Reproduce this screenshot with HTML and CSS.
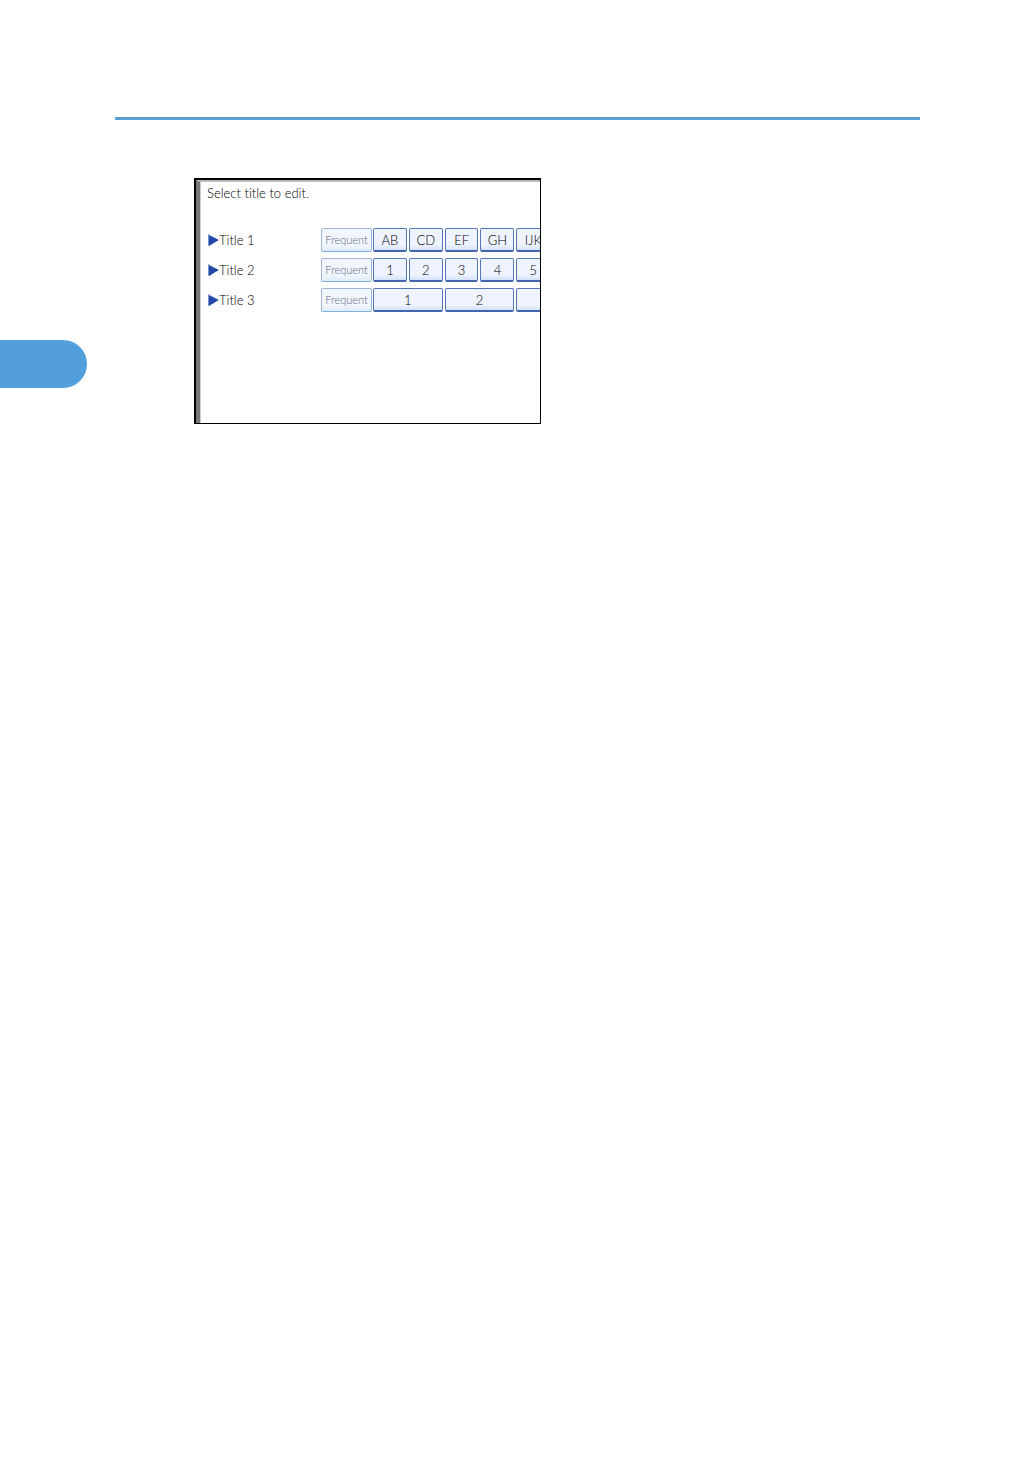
FILE: index.html
```html
<!DOCTYPE html>
<html lang="en">
<head>
	<meta charset="utf-8">
	<title>Select title to edit</title>
	<link rel="stylesheet" href="styles.css">
</head>
<body>
	<header class="rule"></header>
	<div class="tab"></div>

	<main class="panel">
		<div class="screen">
			<p class="message">Select title to edit.</p>

			<div class="row">
				<h2 class="title"><svg class="arrow" viewBox="0 0 11 12"><path d="M0 0L11 6L0 12Z" fill="#7893cb"/><path d="M1 1.5L10.5 6L1 12Z" fill="#2348a5"/></svg>Title 1</h2>
				<button class="key frequent" disabled>Frequent</button>
				<div class="keys">
					<button class="key">AB</button>
					<button class="key">CD</button>
					<button class="key">EF</button>
					<button class="key">GH</button>
					<button class="key">IJK</button>
				</div>
			</div>

			<div class="row">
				<h2 class="title"><svg class="arrow" viewBox="0 0 11 12"><path d="M0 0L11 6L0 12Z" fill="#7893cb"/><path d="M1 1.5L10.5 6L1 12Z" fill="#2348a5"/></svg>Title 2</h2>
				<button class="key frequent" disabled>Frequent</button>
				<div class="keys">
					<button class="key">1</button>
					<button class="key">2</button>
					<button class="key">3</button>
					<button class="key">4</button>
					<button class="key">5</button>
				</div>
			</div>

			<div class="row">
				<h2 class="title"><svg class="arrow" viewBox="0 0 11 12"><path d="M0 0L11 6L0 12Z" fill="#7893cb"/><path d="M1 1.5L10.5 6L1 12Z" fill="#2348a5"/></svg>Title 3</h2>
				<button class="key frequent" disabled>Frequent</button>
				<div class="keys">
					<button class="key wide">1</button>
					<button class="key wide">2</button>
					<button class="key wide"></button>
				</div>
			</div>
		</div>
	</main>
</body>
</html>
```

FILE: styles.css
```css
*{
	box-sizing: border-box;
	margin: 0;
	padding: 0;
}
body{
	background-color: white;
	font-family: Lato, "Liberation Sans", sans-serif;
	font-size: 13px;
	font-weight: 300;
	font-variant-ligatures: none;
	line-height: 16px;
	color: black;
}
.rule{
	height: 3px;
	margin: 117px 116px 0 115px;
	background-color: #5b9fd3;
}
/* chapter tab on the page edge */
.tab{
	position: absolute;
	left: 0;
	top: 340px;
	width: 87px;
	height: 48px;
	border-radius: 0 24px 24px 0;
	background-color: #539fdc;
}
.panel{
	width: 347px;
	margin: 58px 0 0 194px;
	border: 1px solid black;
	border-top-width: 2px;
	border-left-width: 2px;
}
.screen{
	min-height: 243px;
	padding: 3px 0 16px 7px;
	border-left: 4px solid #777;
	border-top: 2px solid #bbb;
	box-shadow: inset 1px 0 #ccc;
	overflow: hidden;
}
.message{
	margin-bottom: 27px;
}
.row{
	display: flex;
	align-items: center;
	margin-bottom: 6px;
}
.title{
	display: flex;
	align-items: center;
	flex: 0 0 114px;
	padding-left: 1px;
	font-size: 13px;
	font-weight: 300;
}
.arrow{
	width: 11px;
	height: 12px;
}
.keys{
	display: grid;
	grid-template-columns: repeat(6, 1fr);
	gap: 2px;
	flex: 0 0 213px;
}
.key{
	height: 24px;
	border: 1px solid #5478b4;
	border-bottom: 2px solid #4265ae;
	border-radius: 2px;
	background: linear-gradient(#eef3ff 75%, #d3e2fa);
	font: inherit;
	color: black;
	white-space: nowrap;
}
.wide{
	grid-column: span 2;
}
.frequent{
	flex: 0 0 51px;
	margin-right: 1px;
	border: 1px solid #9fb6d8;
	border-bottom-color: #84b0de;
	background: linear-gradient(#f1f5fe 75%, #dcecfc);
	color: #62697c;
	font-size: 11px;
}
```
